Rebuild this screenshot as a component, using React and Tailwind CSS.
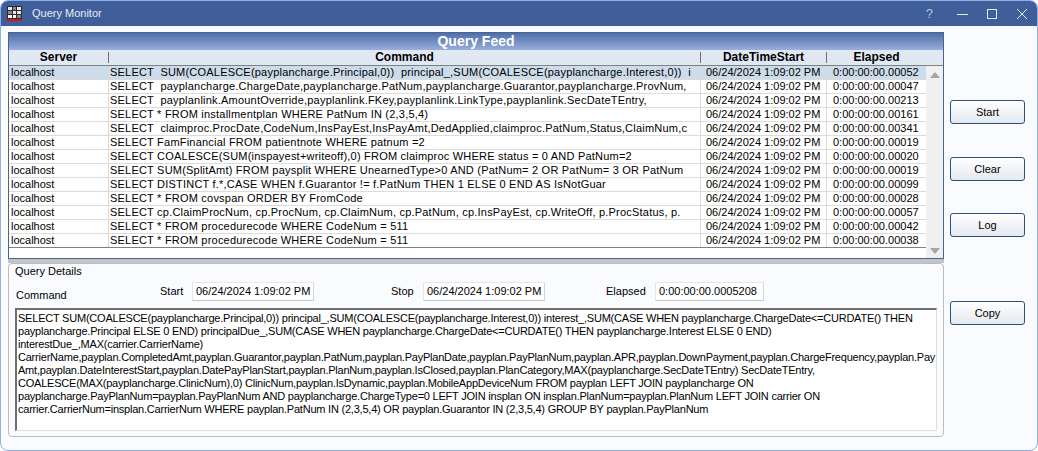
const FONT = "font-['Liberation_Sans',Arial,sans-serif]";

const rows = [
  ["SELECT  SUM(COALESCE(payplancharge.Principal,0))  principal_,SUM(COALESCE(payplancharge.Interest,0))  i", "0:00:00:00.00052"],
  ["SELECT  payplancharge.ChargeDate,payplancharge.PatNum,payplancharge.Guarantor,payplancharge.ProvNum,", "0:00:00:00.00047"],
  ["SELECT  payplanlink.AmountOverride,payplanlink.FKey,payplanlink.LinkType,payplanlink.SecDateTEntry,", "0:00:00:00.00213"],
  ["SELECT * FROM installmentplan WHERE PatNum IN (2,3,5,4)", "0:00:00:00.00161"],
  ["SELECT  claimproc.ProcDate,CodeNum,InsPayEst,InsPayAmt,DedApplied,claimproc.PatNum,Status,ClaimNum,c", "0:00:00:00.00341"],
  ["SELECT FamFinancial FROM patientnote WHERE patnum =2", "0:00:00:00.00019"],
  ["SELECT COALESCE(SUM(inspayest+writeoff),0) FROM claimproc WHERE status = 0 AND PatNum=2", "0:00:00:00.00020"],
  ["SELECT SUM(SplitAmt) FROM paysplit WHERE UnearnedType>0 AND (PatNum= 2 OR PatNum= 3 OR PatNum", "0:00:00:00.00019"],
  ["SELECT DISTINCT f.*,CASE WHEN f.Guarantor != f.PatNum THEN 1 ELSE 0 END AS IsNotGuar", "0:00:00:00.00099"],
  ["SELECT * FROM covspan ORDER BY FromCode", "0:00:00:00.00028"],
  ["SELECT cp.ClaimProcNum, cp.ProcNum, cp.ClaimNum, cp.PatNum, cp.InsPayEst, cp.WriteOff, p.ProcStatus, p.", "0:00:00:00.00057"],
  ["SELECT * FROM procedurecode WHERE CodeNum = 511", "0:00:00:00.00042"],
  ["SELECT * FROM procedurecode WHERE CodeNum = 511", "0:00:00:00.00038"],
];

const details = [
  "SELECT SUM(COALESCE(payplancharge.Principal,0)) principal_,SUM(COALESCE(payplancharge.Interest,0)) interest_,SUM(CASE WHEN payplancharge.ChargeDate<=CURDATE() THEN",
  "payplancharge.Principal ELSE 0 END) principalDue_,SUM(CASE WHEN payplancharge.ChargeDate<=CURDATE() THEN payplancharge.Interest ELSE 0 END)",
  "interestDue_,MAX(carrier.CarrierName)",
  "CarrierName,payplan.CompletedAmt,payplan.Guarantor,payplan.PatNum,payplan.PayPlanDate,payplan.PayPlanNum,payplan.APR,payplan.DownPayment,payplan.ChargeFrequency,payplan.Pay",
  "Amt,payplan.DateInterestStart,payplan.DatePayPlanStart,payplan.PlanNum,payplan.IsClosed,payplan.PlanCategory,MAX(payplancharge.SecDateTEntry) SecDateTEntry,",
  "COALESCE(MAX(payplancharge.ClinicNum),0) ClinicNum,payplan.IsDynamic,payplan.MobileAppDeviceNum FROM payplan LEFT JOIN payplancharge ON",
  "payplancharge.PayPlanNum=payplan.PayPlanNum AND payplancharge.ChargeType=0 LEFT JOIN insplan ON insplan.PlanNum=payplan.PlanNum LEFT JOIN carrier ON",
  "carrier.CarrierNum=insplan.CarrierNum WHERE payplan.PatNum IN (2,3,5,4) OR payplan.Guarantor IN (2,3,5,4) GROUP BY payplan.PayPlanNum",
];

function AppIcon() {
  return (
    <svg width="15" height="15" viewBox="0 0 15 15" className="ml-[6px]">
      <rect x="0" y="0" width="15" height="15" fill="#2b2b2b" />
      <rect x="1" y="1" width="4" height="3" fill="#e8e8e8" />
      <rect x="6" y="1" width="3" height="3" fill="#8a8a8a" />
      <rect x="10" y="1" width="4" height="3" fill="#e8e8e8" />
      <rect x="1" y="5" width="4" height="3" fill="#8a8a8a" />
      <rect x="6" y="5" width="3" height="3" fill="#e8e8e8" />
      <rect x="10" y="5" width="4" height="3" fill="#e8e8e8" />
      <rect x="1" y="9" width="4" height="3" fill="#f4f4f4" />
      <rect x="6" y="9" width="3" height="3" fill="#f4f4f4" />
      <rect x="10" y="9" width="4" height="3" fill="#8a8a8a" />
      <rect x="0" y="13" width="15" height="2" fill="#d01818" />
    </svg>
  );
}

function WinButton({ label }) {
  return (
    <button className="h-6 w-[75px] rounded-[3px] border border-[#28517c] bg-gradient-to-b from-white to-[#e3e9ef] text-[11px] text-black">
      {label}
    </button>
  );
}

function ValueBox({ text, className }) {
  return (
    <div className={`flex h-[19px] items-center rounded-[1px] border border-[#e6e6e6] border-b-[#c4c4c4] border-r-[#d4d4d4] bg-white pl-[3px] whitespace-nowrap ${className}`}>
      {text}
    </div>
  );
}

export default function App() {
  return (
    <div className={`flex h-[451px] w-[1038px] flex-col overflow-hidden rounded-[8px] border border-[#8fb0e6] bg-[#fafbfe] text-[11px] text-black ${FONT}`}>
      <div className="flex h-[25px] shrink-0 items-center bg-[#3f5e9a] text-white">
        <AppIcon />
        <span className="ml-[10px] text-[#e8ecf4]">Query Monitor</span>
        <div className="ml-auto flex items-center text-[#e4e9f3]">
          <span className="mr-[24px] text-[13px] text-[#b4c2dc]">?</span>
          <svg width="11" height="11" viewBox="0 0 11 11" className="mr-[19px]" stroke="currentColor" fill="none">
            <path d="M0 6.5h11" />
          </svg>
          <svg width="10" height="10" viewBox="0 0 10 10" className="mr-[20px]" stroke="currentColor" fill="none">
            <rect x="0.5" y="0.5" width="9" height="9" />
          </svg>
          <svg width="10" height="10" viewBox="0 0 10 10" className="mr-[10px]" stroke="currentColor" fill="none">
            <path d="M0 0l10 10M10 0L0 10" />
          </svg>
        </div>
      </div>

      <div className="flex min-h-0 flex-1">
        <div className="ml-[7px] mt-[6px] flex w-[936px] shrink-0 flex-col">
          <div className="flex h-[227px] shrink-0 flex-col border border-[#4a6491] bg-white">
            <div className="h-[17px] shrink-0 bg-gradient-to-b from-[#4f6ea9] to-[#9aaedb] text-center text-sm leading-[17px] font-bold text-white">
              Query Feed
            </div>
            <div className="flex h-[16px] shrink-0 items-center border-b border-[#808080] bg-[#dfe8f3] text-center text-xs leading-[11px] font-bold">
              <div className="w-[100px] border-r border-[#707070]">Server</div>
              <div className="w-[592px] border-r border-[#707070]">Command</div>
              <div className="w-[126px] border-r border-[#707070]">DateTimeStart</div>
              <div className="w-[99px]">Elapsed</div>
            </div>
            <div className="flex min-h-0 flex-1">
              <div className="w-[917px] shrink-0">
                {rows.map(([command, elapsed], i) => (
                  <div
                    key={i}
                    className={`flex h-[14px] border-b leading-[13px] whitespace-nowrap ${i === 12 ? "border-[#808080]" : "border-[#dcdcdc]"} ${i === 0 ? "bg-[#cddcea]" : ""}`}
                  >
                    <div className="w-[100px] border-r border-[#dcdcdc] pl-[2px]">localhost</div>
                    <div className="w-[592px] overflow-hidden border-r border-[#dcdcdc] pl-[1px] tracking-[0.21px] whitespace-pre">{command}</div>
                    <div className="w-[126px] border-r border-[#dcdcdc] pl-[5px]">06/24/2024 1:09:02 PM</div>
                    <div className="w-[99px] pl-[6px]">{elapsed}</div>
                  </div>
                ))}
              </div>
              <div className="flex w-[17px] flex-col items-center justify-between bg-[#f0f0f0] pt-[6px] pb-[4px]">
                <div className="h-0 w-0 border-x-[5px] border-b-[6px] border-x-transparent border-b-[#a6a6a6]" />
                <div className="h-0 w-0 border-x-[5px] border-t-[6px] border-x-transparent border-t-[#a6a6a6]" />
              </div>
            </div>
          </div>

          <div className="h-[4px] shrink-0 bg-[#c4c4c4]" />

          <div className="mb-[13px] flex min-h-0 flex-1 flex-col rounded-[4px] border border-[#bcbcbc] px-[6px]">
            <div className="leading-[14px]">Query Details</div>
            <div className="mt-[4px] flex h-[19px] items-center">
              <span className="ml-[1px] mt-[7px] w-[144px]">Command</span>
              <span className="w-[32px]">Start</span>
              <ValueBox text="06/24/2024 1:09:02 PM" className="w-[122px]" />
              <span className="ml-[77px] w-[32px]">Stop</span>
              <ValueBox text="06/24/2024 1:09:02 PM" className="w-[122px]" />
              <span className="ml-[61px] w-[49px]">Elapsed</span>
              <ValueBox text="0:00:00:00.0005208" className="w-[109px]" />
            </div>
            <div className="mt-[7px] mb-[5px] min-h-0 flex-1 overflow-hidden border-t-2 border-l-2 border-b border-r border-t-[#6f6f6f] border-l-[#6f6f6f] border-b-[#dedede] border-r-[#dedede] bg-white pl-[1px] pt-[2px] leading-[13px] tracking-[-0.22px] whitespace-nowrap">
              {details.map((line, i) => (
                <div key={i}>{line}</div>
              ))}
            </div>
          </div>
        </div>

        <div className="ml-[6px] flex flex-col pt-[74px]">
          <WinButton label="Start" />
          <div className="mt-[33px]"><WinButton label="Clear" /></div>
          <div className="mt-[32px]"><WinButton label="Log" /></div>
          <div className="mt-[64px]"><WinButton label="Copy" /></div>
        </div>
      </div>
    </div>
  );
}
